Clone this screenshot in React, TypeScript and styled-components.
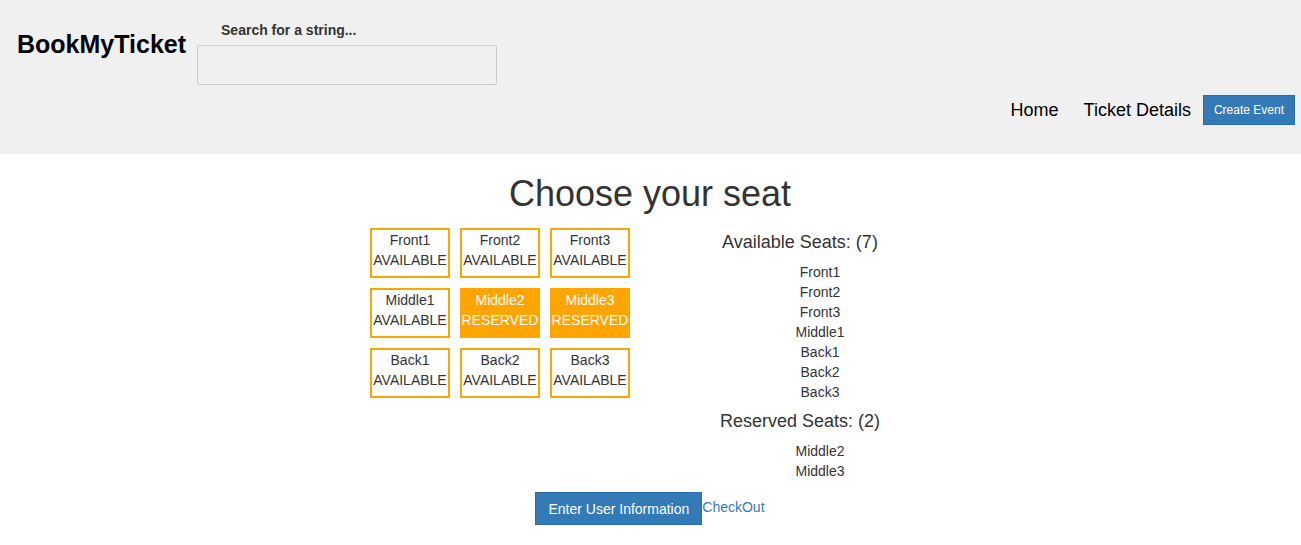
import React from "react";
import styled, { createGlobalStyle } from "styled-components";

const GlobalStyle = createGlobalStyle`
  html, body { margin: 0; padding: 0; background: #fff; }
  body {
    font-family: "Liberation Sans", Arial, Helvetica, sans-serif;
    font-size: 14px;
    line-height: 1.42857;
    color: #333;
  }
  * { box-sizing: border-box; }
`;

const Header = styled.header`
  background: #f0f0f0;
  height: 154px;
  display: flex;
  flex-direction: column;
`;

const TopRow = styled.div`
  display: flex;
  align-items: flex-start;
  padding: 20px 0 0 17px;
`;

const Logo = styled.h1`
  margin: 10px 0 0 0;
  font-size: 25px;
  font-weight: bold;
  line-height: 29px;
  color: #000;
`;

const SearchBox = styled.div`
  display: flex;
  flex-direction: column;
  margin-left: 11px;
`;

const SearchLabel = styled.label`
  font-weight: bold;
  font-size: 14px;
  line-height: 20px;
  margin-left: 24px;
  color: #333;
`;

const SearchInput = styled.input`
  width: 300px;
  height: 40px;
  margin-top: 5px;
  background: #f0f0f0;
  border: 1px solid #ccc;
  border-radius: 2px;
  font-family: inherit;
  font-size: 14px;
  padding: 6px 12px;
  outline: none;
`;

const NavRow = styled.nav`
  display: flex;
  justify-content: flex-end;
  align-items: center;
  padding-right: 6px;
  margin-top: 10px;
`;

const NavLink = styled.a<{ $gap: number }>`
  font-size: 18px;
  color: #000;
  text-decoration: none;
  margin-right: ${(p) => p.$gap}px;
  line-height: 26px;
`;

const SmallButton = styled.button`
  font-family: inherit;
  background: #337ab7;
  border: 1px solid #2e6da4;
  color: #fff;
  font-size: 12px;
  line-height: 18px;
  padding: 5px 10px;
  border-radius: 0;
  height: 30px;
  cursor: pointer;
`;

const Main = styled.main`
  display: flex;
  flex-direction: column;
  align-items: center;
  padding-right: 1px;
`;

const Title = styled.h1`
  font-size: 36px;
  font-weight: 500;
  line-height: 40px;
  margin: 20px 0 14px;
  color: #333;
`;

const Columns = styled.div`
  display: grid;
  grid-template-columns: 300px 300px;
  width: 600px;
`;

const SeatGrid = styled.div`
  display: grid;
  grid-template-columns: repeat(3, 80px);
  gap: 10px;
  justify-content: center;
  align-content: start;
`;

const Seat = styled.div<{ $reserved: boolean }>`
  height: 50px;
  border: 2px solid #ffa500;
  background: ${(p) => (p.$reserved ? "#ffa500" : "#fff")};
  color: ${(p) => (p.$reserved ? "#fff" : "#333")};
  display: flex;
  flex-direction: column;
  align-items: center;
  font-size: 14px;
  line-height: 20px;
  white-space: nowrap;
`;

const SeatList = styled.div`
  display: flex;
  flex-direction: column;
  align-items: center;
`;

const ListTitle = styled.h3<{ $top: number }>`
  font-size: 18px;
  font-weight: 500;
  line-height: 20px;
  margin: ${(p) => p.$top}px 0 10px;
  color: #333;
`;

const List = styled.ul`
  list-style: none;
  margin: 0;
  padding: 0 0 0 40px;
  align-self: stretch;
  text-align: center;
`;

const ListItem = styled.li`
  font-size: 14px;
  line-height: 20px;
  color: #333;
`;

const Footer = styled.div`
  display: flex;
  align-items: center;
  justify-content: center;
  margin-top: 11px;
`;

const PrimaryButton = styled.button`
  font-family: inherit;
  background: #337ab7;
  border: 1px solid #2e6da4;
  color: #fff;
  font-size: 14px;
  line-height: 20px;
  padding: 6px 12px;
  height: 33px;
  border-radius: 0;
  cursor: pointer;
`;

const TextLink = styled.a`
  color: #337ab7;
  font-size: 14px;
  text-decoration: none;
  margin-top: -2px;
`;

const seats = [
  { name: "Front1", reserved: false },
  { name: "Front2", reserved: false },
  { name: "Front3", reserved: false },
  { name: "Middle1", reserved: false },
  { name: "Middle2", reserved: true },
  { name: "Middle3", reserved: true },
  { name: "Back1", reserved: false },
  { name: "Back2", reserved: false },
  { name: "Back3", reserved: false },
];

export default function App() {
  const available = seats.filter((s) => !s.reserved);
  const reserved = seats.filter((s) => s.reserved);
  return (
    <>
      <GlobalStyle />
      <Header>
        <TopRow>
          <Logo>BookMyTicket</Logo>
          <SearchBox>
            <SearchLabel>Search for a string...</SearchLabel>
            <SearchInput type="text" />
          </SearchBox>
        </TopRow>
        <NavRow>
          <NavLink href="#" $gap={25}>Home</NavLink>
          <NavLink href="#" $gap={12}>Ticket Details</NavLink>
          <SmallButton>Create Event</SmallButton>
        </NavRow>
      </Header>
      <Main>
        <Title>Choose your seat</Title>
        <Columns>
          <SeatGrid>
            {seats.map((s) => (
              <Seat key={s.name} $reserved={s.reserved}>
                <span>{s.name}</span>
                <span>{s.reserved ? "RESERVED" : "AVAILABLE"}</span>
              </Seat>
            ))}
          </SeatGrid>
          <SeatList>
            <ListTitle $top={4}>Available Seats: ({available.length})</ListTitle>
            <List>
              {available.map((s) => (
                <ListItem key={s.name}>{s.name}</ListItem>
              ))}
            </List>
            <ListTitle $top={9}>Reserved Seats: ({reserved.length})</ListTitle>
            <List>
              {reserved.map((s) => (
                <ListItem key={s.name}>{s.name}</ListItem>
              ))}
            </List>
          </SeatList>
        </Columns>
        <Footer>
          <PrimaryButton>Enter User Information</PrimaryButton>
          <TextLink href="#">CheckOut</TextLink>
        </Footer>
      </Main>
    </>
  );
}
